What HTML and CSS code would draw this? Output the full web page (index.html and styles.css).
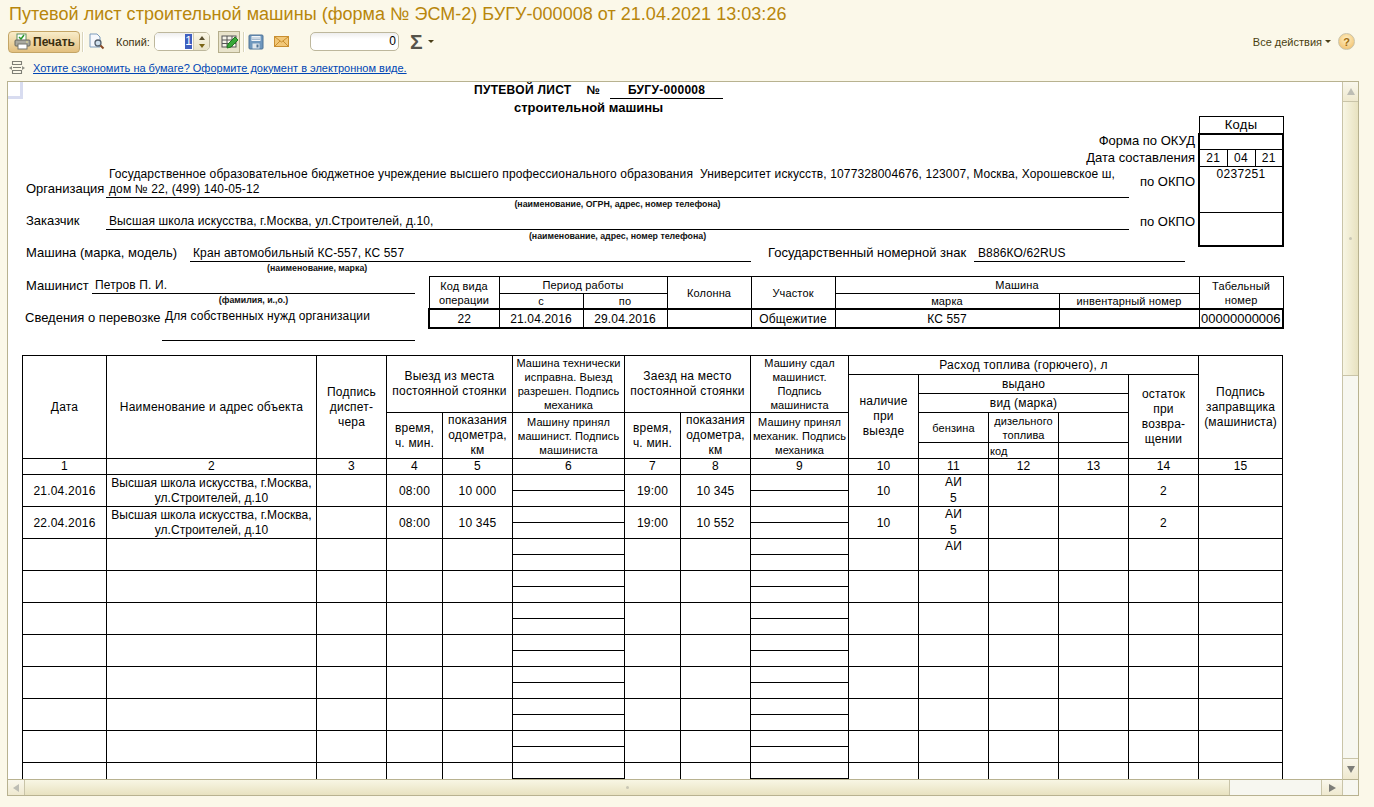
FILE: index.html
```html
<!DOCTYPE html>
<html lang="ru">
<head>
<meta charset="utf-8">
<title>Путевой лист</title>
<link rel="stylesheet" href="styles.css">
</head>
<body>
<div class="app">
  <h1 class="win-title">Путевой лист строительной машины (форма № ЭСМ-2) БУГУ-000008 от 21.04.2021 13:03:26</h1>
  <div class="toolbar">
    <button class="print-btn">
      <svg width="17" height="17" viewBox="0 0 17 17"><rect x="3" y="1" width="9" height="7" fill="#fff" stroke="#5f8f5f"/><path d="M5 4l2 2 3-4" fill="none" stroke="#2a9a2a" stroke-width="1.5"/><rect x="1" y="7" width="15" height="6" rx="1" fill="#a9a9a0" stroke="#66665c"/><rect x="4" y="11" width="9" height="5" fill="#fff" stroke="#77776c"/><rect x="12" y="8.500" width="2" height="1" fill="#e8e090"/></svg>
      <span>Печать</span>
    </button>
    <span class="sep sep-a"></span>
    <svg class="ico-preview" width="17" height="17" viewBox="0 0 17 17"><path d="M2 1h7l3 3v10H2z" fill="#f6f8fc" stroke="#7d9cbc"/><circle cx="10" cy="10" r="3" fill="#cfe0ee" stroke="#54606c" stroke-width="1.300"/><path d="M12.500 12.500l3 3" stroke="#8a4a24" stroke-width="2"/></svg>
    <label class="copies-label">Копий:</label>
    <div class="spin">
      <div class="spin-value"><span class="selected">1</span></div>
      <div class="spin-btns">
        <svg width="8" height="14" viewBox="0 0 8 14"><path d="M4 1l3 4H1z" fill="#5a5030"/><path d="M4 13l3-4H1z" fill="#7a6414"/></svg>
      </div>
    </div>
    <div class="pressed">
      <svg width="17" height="16" viewBox="0 0 17 16"><rect x="1" y="2" width="14" height="11" fill="#f4f2e8" stroke="#555"/><path d="M1 6h14M1 9.500h14M6 2v11M11 2v11" stroke="#555"/><path d="M6 14l1-4 7-7 3 3-7 7z" fill="#38a838" stroke="#1f7a1f"/></svg>
    </div>
    <span class="sep sep-b"></span>
    <svg class="ico-save" width="16" height="16" viewBox="0 0 16 16"><rect x="1" y="1" width="14" height="14" rx="1" fill="#6f97bd" stroke="#4f7396"/><rect x="3.500" y="2" width="9" height="5" fill="#f2f5f8"/><path d="M4 4h8M4 5.500h8" stroke="#a8bccf"/><rect x="4.500" y="9.500" width="7" height="5" fill="#dfe6ec"/><rect x="8.500" y="10.500" width="2" height="3" fill="#4f7396"/></svg>
    <svg class="ico-mail" width="15" height="12" viewBox="0 0 15 12"><rect x=".5" y=".5" width="14" height="10" fill="#f2c878" stroke="#c98f30"/><path d="M1 1l6.500 5L14 1M1 10l5-5M14 10L9 5" fill="none" stroke="#c98f30"/></svg>
    <div class="sum-input">0</div>
    <span class="sigma">Σ</span>
    <span class="caret caret-sum"></span>
    <div class="tool-right">
      <span class="all-actions">Все действия</span>
      <span class="caret caret-all"></span>
      <span class="help">?</span>
    </div>
  </div>
  <div class="hint">
    <svg width="16" height="15" viewBox="0 0 16 15"><path d="M3.500 1.500h9v3h-9zM4 7.500h8M3.500 10.500h9v3h-9z" fill="none" stroke="#7f7f76" stroke-width="1.100"/><path d="M0 8l3-2v4zM16 8l-3-2v4z" fill="#8f8f86"/></svg>
    <a class="hint-link" href="#">Хотите сэкономить на бумаге? Оформите документ в электронном виде.</a>
  </div>

  <div class="frame">
    <div class="viewport">
      <span class="corner-cell"></span>
      <div class="sheet">
        <div class="doc-title">
          <span>ПУТЕВОЙ ЛИСТ</span>
          <span class="doc-no">№</span>
          <span class="doc-num">БУГУ-000008</span>
        </div>
        <div class="doc-sub">строительной машины</div>

        <div class="block-b">
          <div class="b-left">
            <div class="right-label first">Форма по ОКУД</div>
            <div class="right-label second">Дата составления</div>
            <div class="form-row org-row">
              <span class="label l-org">Организация</span>
              <div class="field f-org">Государственное образовательное бюджетное учреждение высшего профессионального образования&nbsp; Университет искусств, 1077328004676, 123007, Москва, Хорошевское ш,<br>дом № 22, (499) 140-05-12</div>
              <span class="okpo okpo-org">по ОКПО</span>
            </div>
            <div class="caption cap-org">(наименование, ОГРН, адрес, номер телефона)</div>
            <div class="form-row cust-row">
              <span class="label l-org">Заказчик</span>
              <div class="field f-org">Высшая школа искусства, г.Москва, ул.Строителей, д.10,</div>
              <span class="okpo">по ОКПО</span>
            </div>
            <div class="caption cap-org">(наименование, адрес, номер телефона)</div>
          </div>
          <table class="codes">
            <colgroup><col class="c28"><col class="c28"><col class="c28"></colgroup>
            <tr class="cr-head"><td colspan="3">Коды</td></tr>
            <tr class="cr-a"><td colspan="3" class="thick-top"></td></tr>
            <tr class="cr-b"><td>21</td><td>04</td><td>21</td></tr>
            <tr class="cr-c"><td colspan="3" class="top">0237251</td></tr>
            <tr class="cr-d"><td colspan="3"></td></tr>
          </table>
        </div>

        <div class="form-row car-row">
          <span class="label l-car">Машина (марка, модель)</span>
          <div class="field f-car">Кран автомобильный КС-557, КС 557</div>
          <span class="label l-gos">Государственный номерной знак</span>
          <div class="field f-gos">В886КО/62RUS</div>
        </div>

        <div class="block-c">
          <div class="c-left">
            <div class="caption cap-car">(наименование, марка)</div>
            <div class="form-row driver-row">
              <span class="label l-drv">Машинист</span>
              <div class="field f-drv">Петров П. И.</div>
            </div>
            <div class="caption cap-drv">(фамилия, и.,о.)</div>
            <div class="form-row info-row">
              <span class="label l-info">Сведения о перевозке</span>
              <div class="field f-info">Для собственных нужд организации</div>
            </div>
          </div>
          <table class="ops">
            <colgroup>
              <col class="o70"><col class="o84"><col class="o84"><col class="o84"><col class="o84"><col class="o112"><col class="o112"><col class="o140"><col class="o84">
            </colgroup>
            <tr class="or-a">
              <td rowspan="2" class="wrap">Код вида операции</td>
              <td colspan="2">Период работы</td>
              <td rowspan="2">Колонна</td>
              <td rowspan="2">Участок</td>
              <td colspan="3">Машина</td>
              <td rowspan="2" class="wrap">Табельный номер</td>
            </tr>
            <tr class="or-b">
              <td>с</td><td>по</td><td colspan="2">марка</td><td>инвентарный номер</td>
            </tr>
            <tr class="or-c">
              <td>22</td><td>21.04.2016</td><td>29.04.2016</td><td></td><td>Общежитие</td><td colspan="2">КС 557</td><td></td>
              <td>00000000006</td>
            </tr>
          </table>
        </div>

        <table class="main">
          <colgroup>
            <col class="m84"><col class="m210"><col class="m70"><col class="m56"><col class="m70"><col class="m112"><col class="m56"><col class="m70"><col class="m98"><col class="m70"><col class="m70"><col class="m70"><col class="m70"><col class="m70"><col class="m84">
          </colgroup>
          <tr class="r19">
            <td rowspan="5">Дата</td>
            <td rowspan="5">Наименование и адрес объекта</td>
            <td rowspan="5">Подпись диспет-<br>чера</td>
            <td rowspan="3" colspan="2">Выезд из места<br>постоянной стоянки</td>
            <td rowspan="3" class="tight">Машина технически исправна. Выезд разрешен. Подпись механика</td>
            <td rowspan="3" colspan="2">Заезд на место<br>постоянной стоянки</td>
            <td rowspan="3" class="tight">Машину сдал<br>машинист.<br>Подпись<br>машиниста</td>
            <td colspan="5">Расход топлива (горючего), л</td>
            <td rowspan="5">Подпись заправщика (машиниста)</td>
          </tr>
          <tr class="r19">
            <td rowspan="4">наличие<br>при<br>выезде</td>
            <td colspan="3">выдано</td>
            <td rowspan="4">остаток<br>при<br>возвра-<br>щении</td>
          </tr>
          <tr class="r19"><td colspan="3">вид (марка)</td></tr>
          <tr class="r30">
            <td rowspan="2">время,<br>ч. мин.</td>
            <td rowspan="2">показания одометра, км</td>
            <td rowspan="2" class="tight">Машину принял машинист. Подпись машиниста</td>
            <td rowspan="2">время,<br>ч. мин.</td>
            <td rowspan="2">показания одометра, км</td>
            <td rowspan="2" class="tight">Машину принял механик. Подпись механика</td>
            <td class="tight">бензина</td>
            <td class="tight">дизельного топлива</td>
            <td></td>
          </tr>
          <tr class="r16"><td></td><td class="tight left">код</td><td></td></tr>
          <tr class="r16"><td>1</td><td>2</td><td>3</td><td>4</td><td>5</td><td>6</td><td>7</td><td>8</td><td>9</td><td>10</td><td>11</td><td>12</td><td>13</td><td>14</td><td>15</td></tr>

          <tr class="r16">
            <td rowspan="2">21.04.2016</td><td rowspan="2" class="obj">Высшая школа искусства, г.Москва, ул.Строителей, д.10</td><td rowspan="2"></td><td rowspan="2">08:00</td><td rowspan="2">10 000</td><td></td><td rowspan="2">19:00</td><td rowspan="2">10 345</td><td></td><td rowspan="2">10</td><td class="no-b">АИ</td><td rowspan="2"></td><td rowspan="2"></td><td rowspan="2">2</td><td rowspan="2"></td>
          </tr>
          <tr class="r16"><td></td><td></td><td class="no-t">5</td></tr>
          <tr class="r16">
            <td rowspan="2">22.04.2016</td><td rowspan="2" class="obj">Высшая школа искусства, г.Москва, ул.Строителей, д.10</td><td rowspan="2"></td><td rowspan="2">08:00</td><td rowspan="2">10 345</td><td></td><td rowspan="2">19:00</td><td rowspan="2">10 552</td><td></td><td rowspan="2">10</td><td class="no-b">АИ</td><td rowspan="2"></td><td rowspan="2"></td><td rowspan="2">2</td><td rowspan="2"></td>
          </tr>
          <tr class="r16"><td></td><td></td><td class="no-t">5</td></tr>
          <tr class="r16">
            <td rowspan="2"></td><td rowspan="2"></td><td rowspan="2"></td><td rowspan="2"></td><td rowspan="2"></td><td></td><td rowspan="2"></td><td rowspan="2"></td><td></td><td rowspan="2"></td><td class="no-b">АИ</td><td rowspan="2"></td><td rowspan="2"></td><td rowspan="2"></td><td rowspan="2"></td>
          </tr>
          <tr class="r16"><td></td><td></td><td class="no-t"></td></tr>
          <tr class="r16">
            <td rowspan="2"></td><td rowspan="2"></td><td rowspan="2"></td><td rowspan="2"></td><td rowspan="2"></td><td></td><td rowspan="2"></td><td rowspan="2"></td><td></td><td rowspan="2"></td><td rowspan="2"></td><td rowspan="2"></td><td rowspan="2"></td><td rowspan="2"></td><td rowspan="2"></td>
          </tr>
          <tr class="r16"><td></td><td></td></tr>
          <tr class="r16">
            <td rowspan="2"></td><td rowspan="2"></td><td rowspan="2"></td><td rowspan="2"></td><td rowspan="2"></td><td></td><td rowspan="2"></td><td rowspan="2"></td><td></td><td rowspan="2"></td><td rowspan="2"></td><td rowspan="2"></td><td rowspan="2"></td><td rowspan="2"></td><td rowspan="2"></td>
          </tr>
          <tr class="r16"><td></td><td></td></tr>
          <tr class="r16">
            <td rowspan="2"></td><td rowspan="2"></td><td rowspan="2"></td><td rowspan="2"></td><td rowspan="2"></td><td></td><td rowspan="2"></td><td rowspan="2"></td><td></td><td rowspan="2"></td><td rowspan="2"></td><td rowspan="2"></td><td rowspan="2"></td><td rowspan="2"></td><td rowspan="2"></td>
          </tr>
          <tr class="r16"><td></td><td></td></tr>
          <tr class="r16">
            <td rowspan="2"></td><td rowspan="2"></td><td rowspan="2"></td><td rowspan="2"></td><td rowspan="2"></td><td></td><td rowspan="2"></td><td rowspan="2"></td><td></td><td rowspan="2"></td><td rowspan="2"></td><td rowspan="2"></td><td rowspan="2"></td><td rowspan="2"></td><td rowspan="2"></td>
          </tr>
          <tr class="r16"><td></td><td></td></tr>
          <tr class="r16">
            <td rowspan="2"></td><td rowspan="2"></td><td rowspan="2"></td><td rowspan="2"></td><td rowspan="2"></td><td></td><td rowspan="2"></td><td rowspan="2"></td><td></td><td rowspan="2"></td><td rowspan="2"></td><td rowspan="2"></td><td rowspan="2"></td><td rowspan="2"></td><td rowspan="2"></td>
          </tr>
          <tr class="r16"><td></td><td></td></tr>
          <tr class="r16">
            <td rowspan="2"></td><td rowspan="2"></td><td rowspan="2"></td><td rowspan="2"></td><td rowspan="2"></td><td></td><td rowspan="2"></td><td rowspan="2"></td><td></td><td rowspan="2"></td><td rowspan="2"></td><td rowspan="2"></td><td rowspan="2"></td><td rowspan="2"></td><td rowspan="2"></td>
          </tr>
          <tr class="r16"><td></td><td></td></tr>
          <tr class="r16">
            <td rowspan="2"></td><td rowspan="2"></td><td rowspan="2"></td><td rowspan="2"></td><td rowspan="2"></td><td></td><td rowspan="2"></td><td rowspan="2"></td><td></td><td rowspan="2"></td><td rowspan="2"></td><td rowspan="2"></td><td rowspan="2"></td><td rowspan="2"></td><td rowspan="2"></td>
          </tr>
          <tr class="r16"><td></td><td></td></tr>
        </table>
      </div>
    </div>
    <div class="vbar">
      <div class="sb-btn v-up"><span class="arr arr-up"></span></div>
      <div class="v-thumb"><span class="grip"></span></div>
      <div class="sb-track"></div>
      <div class="sb-btn v-down"><span class="arr arr-down"></span></div>
    </div>
    <div class="hbar">
      <div class="sb-btn h-left"><span class="arr arr-left"></span></div>
      <div class="h-thumb"><span class="grip"></span></div>
      <div class="sb-track"></div>
      <div class="sb-btn h-right"><span class="arr arr-right"></span></div>
    </div>
    <div class="sb-corner"></div>
  </div>
</div>
</body>
</html>
```
FILE: styles.css
```css
* { box-sizing: border-box; }
html, body { margin: 0; padding: 0; height: 100%; overflow: hidden; }
body { background: #fbf8e9; font-family: "Liberation Sans", Arial, sans-serif; color: #000; }
.app { width: 1374px; height: 807px; display: flex; flex-direction: column; overflow: hidden; }

.win-title { margin: 0; padding: 3px 0 0 9px; height: 29px; flex: none; font-size: 18px; line-height: 22px; font-weight: 400; color: #b8860b; white-space: nowrap; letter-spacing: .03px; }

.toolbar { height: 25px; display: flex; align-items: center; padding-left: 8px; font-size: 11px; color: #3f3410; flex: none; }
.print-btn { width: 72px; height: 22px; padding: 0 0 0 5px; display: flex; align-items: center; gap: 2px; border: 1px solid #c4a566; border-radius: 4px; background: linear-gradient(#f8ecc9, #e3c07f); font: bold 12px "Liberation Sans", Arial, sans-serif; color: #3a2f10; }
.sep { width: 2px; height: 20px; border-left: 1px solid #d9d4bb; border-right: 1px solid #fff; }
.sep-a { margin-left: 2px; }
.ico-preview { margin-left: 4px; }
.copies-label { margin-left: 11px; width: 38px; }
.spin { width: 56px; height: 19px; display: flex; border: 1px solid #bdb79c; border-radius: 5px; overflow: hidden; background: #fff; }
.spin-value { flex: 1; text-align: right; line-height: 17px; font-size: 12px; color: #000; background: linear-gradient(#eee, #fff 35%); }
.selected { display: inline-block; width: 7px; height: 15px; line-height: 15px; text-align: center; margin-right: 1px; background: #3f5fbf; color: #fff; }
.spin-btns { width: 16px; display: flex; align-items: center; justify-content: center; background: linear-gradient(#fbf7e6, #e9e3c8); border-left: 1px solid #d2ccb0; }
.pressed { width: 22px; height: 22px; margin-left: 8px; display: flex; align-items: center; justify-content: center; background: #e8e3cb; border: 1px solid #b5ae8c; }
.sep-b { margin-left: 3px; }
.ico-save { margin-left: 3px; }
.ico-mail { margin-left: 10px; }
.sum-input { width: 89px; height: 19px; margin-left: 21px; padding-right: 2px; text-align: right; font-size: 12px; line-height: 17px; color: #000; border: 1px solid #bdb79c; border-radius: 5px; background: linear-gradient(#eee, #fff 35%); }
.sigma { margin-left: 11px; width: 18px; font-size: 21px; line-height: 20px; color: #55534a; font-weight: 700; }
.caret { width: 0; height: 0; border-left: 3px solid transparent; border-right: 3px solid transparent; border-top: 3px solid #4a3f18; }
.caret-sum { margin-left: 0; }
.tool-right { margin-left: auto; margin-right: 19px; display: flex; align-items: center; }
.all-actions { color: #4a3f10; font-size: 11px; }
.caret-all { margin: 0 7px 0 3px; }
.help { width: 17px; height: 17px; border-radius: 50%; display: flex; align-items: center; justify-content: center; background: radial-gradient(circle at 50% 35%, #fff1c4, #efb860); border: 1px solid #c9c3a8; color: #a06a10; font-size: 11px; font-weight: 700; }

.hint { height: 27px; padding: 0 0 0 9px; display: flex; align-items: center; gap: 8px; flex: none; }
.hint-link { font-size: 11px; color: #0046b4; }

.frame { margin-left: 7px; width: 1352px; height: 715px; flex: none; border: 1px solid #b8b290; display: grid; grid-template-columns: 1334px 16px; grid-template-rows: 697px 16px; background: #fff; }
.viewport { position: relative; overflow: hidden; background: #fff; }
.corner-cell { position: absolute; left: 0; top: 0; width: 15px; height: 17px; background: #fff; border-right: 3px solid #d8dcf0; border-bottom: 3px solid #d8dcf0; }
.sheet { padding-left: 14px; width: 1334px; font-size: 12px; line-height: 15px; letter-spacing: .12px; }

.doc-title { height: 17px; padding-left: 452px; display: flex; font-size: 12px; line-height: 16px; font-weight: 700; letter-spacing: .3px; }
.doc-no { margin-left: 15px; }
.doc-num { margin-left: 10px; width: 113px; height: 17px; text-align: center; border-bottom: 1px solid #000; }
.doc-sub { height: 17px; padding-left: 492px; font-size: 13px; line-height: 18px; font-weight: 700; letter-spacing: 0; }

.block-b { display: flex; height: 129px; }
.b-left { width: 1176px; }
.right-label { height: 16px; text-align: right; padding-right: 3px; font-size: 13px; line-height: 16px; letter-spacing: 0; }
.first { margin-top: 17px; }
.second { margin-top: 1px; }
.label { font-size: 13px; white-space: nowrap; letter-spacing: 0; padding-bottom: 1px; }
.field { border-bottom: 1px solid #000; padding-left: 3px; white-space: nowrap; }
.form-row { display: flex; align-items: flex-end; }
.org-row { height: 32px; }
.cust-row { height: 18px; margin-top: 3px; }
.l-org { width: 84px; padding-left: 4px; line-height: 16px; }
.f-org { width: 1023px; }
.okpo { width: 69px; text-align: right; padding-right: 3px; font-size: 13px; line-height: 16px; letter-spacing: 0; }
.okpo-org { padding-bottom: 8px; }
.caption { font-size: 8.800px; line-height: 12px; font-weight: 700; text-align: center; color: #111; letter-spacing: 0; }
.cap-org { width: 1107px; padding-left: 84px; height: 11px; }
.cap-org + .form-row + .cap-org { height: 12px; }
.codes, .ops, .main { border-collapse: collapse; table-layout: fixed; }
.codes { width: 84px; height: 129px; margin-top: 0; letter-spacing: .3px; }
.codes td, .ops td, .main td { border: 1px solid #000; padding: 0; text-align: center; vertical-align: middle; overflow: hidden; }
.c28 { width: 28px; }
.cr-head { height: 17px; font-size: 13px; }
.cr-a { height: 16px; }
.cr-b { height: 17px; }
.cr-c { height: 46px; }
.cr-d { height: 33px; }
.top { vertical-align: top !important; }
.codes .cr-a td { border: 2px solid #000; border-bottom-width: 1px; }
.codes .cr-b td:first-child, .codes .cr-c td, .codes .cr-d td { border-left: 2px solid #000; }
.codes .cr-b td:last-child, .codes .cr-c td, .codes .cr-d td { border-right: 2px solid #000; }
.codes .cr-d td { border-bottom: 2px solid #000; }

.car-row { height: 17px; }
.l-car { width: 168px; padding-left: 4px; line-height: 16px; }
.f-car { width: 561px; }
.l-gos { margin-left: 17px; width: 206px; line-height: 16px; }
.f-gos { width: 211px; padding-left: 4px; }

.block-c { display: flex; height: 93px; }
.c-left { width: 406px; flex: none; }
.cap-car { width: 588px; text-align: left; padding-left: 245px; height: 14px; }
.driver-row { height: 18px; }
.l-drv { width: 70px; padding-left: 4px; line-height: 15px; }
.f-drv { width: 323px; }
.cap-drv { width: 463px; height: 12px; }
.info-row { align-items: flex-start; margin-top: 2px; }
.l-info { width: 140px; padding-left: 3px; line-height: 20px; }
.f-info { width: 253px; height: 33px; line-height: 17px; margin-top: 0; }

.ops { width: 854px; height: 50px; margin-top: 14px; font-size: 11px; line-height: 14px; letter-spacing: .15px; }
.o70 { width: 70px; }
.o84 { width: 84px; }
.o112 { width: 112px; }
.o140 { width: 140px; }
.or-a { height: 17px; }
.or-b { height: 14px; }
.or-c { height: 19px; font-size: 12px; }
.ops .or-c td { border-top: 2px solid #000; border-bottom: 2px solid #000; }
.ops .or-c td:first-child { border-left: 2px solid #000; }
.ops .or-c td:last-child { border-right: 2px solid #000; font-size: 13px; letter-spacing: 0; }
.wrap { white-space: normal; }

.main { width: 1260px; line-height: 15px; font-size: 12px; letter-spacing: .2px; margin-top: 0; }
.m84 { width: 84px; }
.m210 { width: 210px; }
.m70 { width: 70px; }
.m56 { width: 56px; }
.m112 { width: 112px; }
.m98 { width: 98px; }
.r19 { height: 19px; }
.r30 { height: 30px; }
.r16 { height: 16px; }
.main .tight { font-size: 11px; line-height: 14px; letter-spacing: .1px; }
.main .left { text-align: left; padding-left: 1px; }
.main td.no-b { border-bottom: none; }
.main td.no-t { border-top: none; }
.main .r16 td[rowspan="2"] { padding-top: 2px; }
.main .r16 td.obj { padding-top: 0; letter-spacing: .05px; }

.vbar { display: flex; flex-direction: column; border-left: 1px solid #c9c4a8; background: #f7f7f0; }
.hbar { display: flex; border-top: 1px solid #b8b290; background: #f7f7f0; }
.sb-btn { display: flex; align-items: center; justify-content: center; flex: none; background: linear-gradient(#f9f7ec, #efe9cf); }
.v-up { height: 20px; border-bottom: 1px solid #c9c4a8; }
.v-down { height: 21px; border-top: 1px solid #c9c4a8; }
.v-thumb { height: 274px; display: flex; align-items: center; justify-content: center; flex: none; background: linear-gradient(90deg, #f8f6e4, #e8e2c0); border-bottom: 1px solid #c9c4a8; }
.sb-track { flex: 1; background: #f7f7f0; }
.h-left { width: 17px; border-right: 1px solid #c9c4a8; }
.h-right { width: 21px; border-left: 1px solid #c9c4a8; }
.h-thumb { width: 1205px; display: flex; align-items: center; justify-content: center; flex: none; background: linear-gradient(#f8f6e4, #e8e2c0); border-right: 1px solid #c9c4a8; }
.sb-corner { background: #f7f7f0; border-left: 1px solid #c9c4a8; border-top: 1px solid #b8b290; }
.grip { width: 3px; height: 3px; border-radius: 50%; background: #c9c6b4; }
.arr { width: 0; height: 0; }
.arr-up { border-left: 4px solid transparent; border-right: 4px solid transparent; border-bottom: 7px solid #bdbdb4; }
.arr-down { border-left: 4px solid transparent; border-right: 4px solid transparent; border-top: 7px solid #7d7d78; }
.arr-left { border-top: 4px solid transparent; border-bottom: 4px solid transparent; border-right: 6px solid #bdbdb4; }
.arr-right { border-top: 4px solid transparent; border-bottom: 4px solid transparent; border-left: 7px solid #7d7d78; }
```
